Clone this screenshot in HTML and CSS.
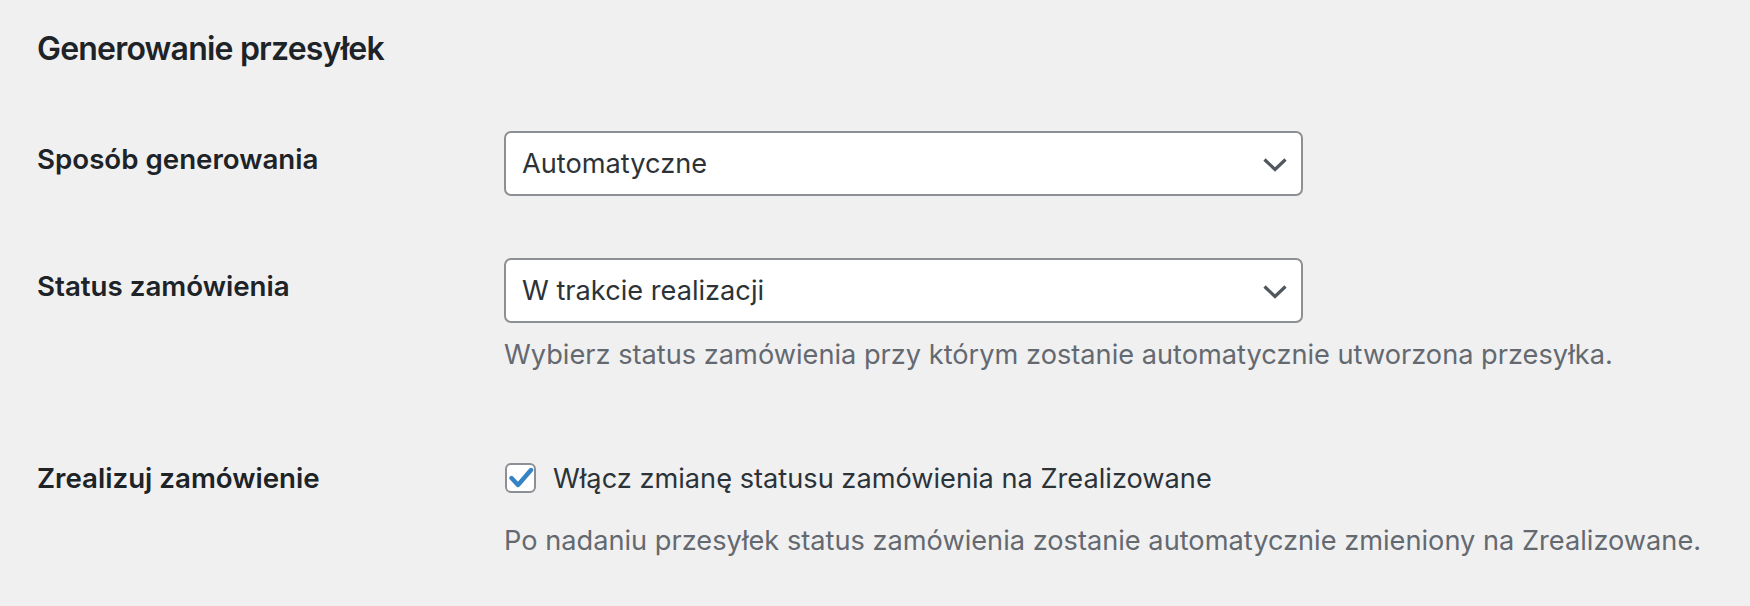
FILE: index.html
```html
<!DOCTYPE html>
<html lang="pl">
<head>
<meta charset="utf-8">
<title>Generowanie przesyłek</title>
<link rel="stylesheet" href="styles.css">
</head>
<body>
<div class="wrap">
  <h2 class="title">Generowanie przesyłek</h2>
  <div class="form-table">
    <div class="row row-1">
      <div class="th">Sposób generowania</div>
      <div class="td">
        <div class="select">
          <span class="select-text">Automatyczne</span>
          <svg class="chevron" width="24" height="14" viewBox="0 0 24 14"><path d="M1.5 1.5 L12 11.5 L22.5 1.5" fill="none" stroke="#50575e" stroke-width="3.2"/></svg>
        </div>
      </div>
    </div>
    <div class="row row-2">
      <div class="th">Status zamówienia</div>
      <div class="td">
        <div class="select">
          <span class="select-text">W trakcie realizacji</span>
          <svg class="chevron" width="24" height="14" viewBox="0 0 24 14"><path d="M1.5 1.5 L12 11.5 L22.5 1.5" fill="none" stroke="#50575e" stroke-width="3.2"/></svg>
        </div>
        <p class="description">Wybierz status zamówienia przy którym zostanie automatycznie utworzona przesyłka.</p>
      </div>
    </div>
    <div class="row row-3">
      <div class="th">Zrealizuj zamówienie</div>
      <div class="td">
        <label class="check-line">
          <span class="checkbox"><svg width="26" height="26" viewBox="0 0 26 26"><path d="M3.5 13 L10 20 L23 5" fill="none" stroke="#3582c4" stroke-width="4.4" stroke-linecap="round" stroke-linejoin="round"/></svg></span>
          <span class="check-text">Włącz zmianę statusu zamówienia na Zrealizowane</span>
        </label>
        <p class="description desc-2">Po nadaniu przesyłek status zamówienia zostanie automatycznie zmieniony na Zrealizowane.</p>
      </div>
    </div>
  </div>
</div>
</body>
</html>
```
FILE: styles.css
```css
html, body {
  margin: 0;
  padding: 0;
  background: #f0f0f1;
}
body {
  font-family: Inter, "Liberation Sans", sans-serif;
  color: #1d2327;
  width: 1750px;
  height: 606px;
  overflow: hidden;
}
.wrap {
  padding-left: 37px;
}
.title {
  margin: 29px 0 62px 0;
  font-size: 32px;
  letter-spacing: -0.8px;
  line-height: 40px;
  font-weight: 600;
  color: #1d2327;
}
.row {
  display: grid;
  grid-template-columns: 467px 1fr;
}
.th {
  font-size: 27.7px;
  line-height: 36px;
  font-weight: 600;
  color: #1d2327;
  padding-top: 10px;
}
.row-2 {
  margin-top: 62px;
}
.row-3 {
  margin-top: 87px;
}
.row-3 .th {
  padding-top: 0;
}
.select {
  box-sizing: border-box;
  width: 799px;
  height: 65px;
  border: 2px solid #8c8f94;
  border-radius: 7px;
  background: #fff;
  display: flex;
  align-items: center;
  justify-content: space-between;
  padding: 0 14px 0 16px;
}
.select-text {
  font-size: 27.2px;
  color: #2c3338;
}
.chevron {
  display: block;
  margin-top: 2px;
}
.description {
  margin: 14px 0 0 0;
  font-size: 27.2px;
  line-height: 36px;
  color: #646970;
}
.desc-2 {
  margin-top: 27px;
}
.check-line {
  display: flex;
  align-items: center;
  height: 36px;
}
.checkbox {
  box-sizing: border-box;
  width: 31px;
  height: 30px;
  border: 2px solid #8c8f94;
  border-radius: 6px;
  background: #fff;
  display: flex;
  align-items: center;
  justify-content: center;
  margin-left: 1px;
}
.checkbox svg {
  display: block;
}
.check-text {
  margin-left: 17px;
  font-size: 27.2px;
  color: #2c3338;
}
```
